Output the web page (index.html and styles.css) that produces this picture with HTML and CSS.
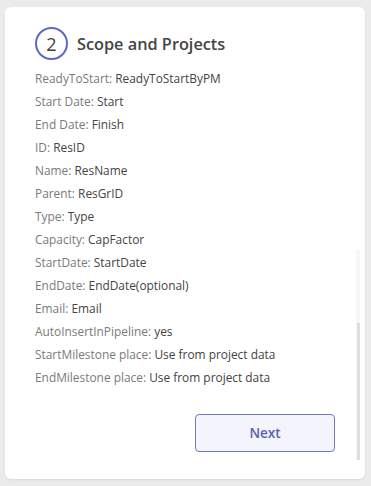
FILE: index.html
```html
<!DOCTYPE html>
<html>
<head>
<meta charset="utf-8">
<link rel="stylesheet" href="styles.css">
</head>
<body>
<div class="card">
  <div class="content">
    <div class="header">
      <div class="step">2</div>
      <h2 class="title">Scope and Projects</h2>
    </div>
    <ul class="fields">
      <li><span class="lbl">ReadyToStart:</span> <span class="val">ReadyToStartByPM</span></li>
      <li><span class="lbl">Start Date:</span> <span class="val">Start</span></li>
      <li><span class="lbl">End Date:</span> <span class="val">Finish</span></li>
      <li><span class="lbl">ID:</span> <span class="val">ResID</span></li>
      <li><span class="lbl">Name:</span> <span class="val">ResName</span></li>
      <li><span class="lbl">Parent:</span> <span class="val">ResGrID</span></li>
      <li><span class="lbl">Type:</span> <span class="val">Type</span></li>
      <li><span class="lbl">Capacity:</span> <span class="val">CapFactor</span></li>
      <li><span class="lbl">StartDate:</span> <span class="val">StartDate</span></li>
      <li><span class="lbl">EndDate:</span> <span class="val">EndDate(optional)</span></li>
      <li><span class="lbl">Email:</span> <span class="val">Email</span></li>
      <li><span class="lbl">AutoInsertInPipeline:</span> <span class="val">yes</span></li>
      <li><span class="lbl">StartMilestone place:</span> <span class="val">Use from project data</span></li>
      <li><span class="lbl">EndMilestone place:</span> <span class="val">Use from project data</span></li>
    </ul>
    <div class="actions">
      <button class="next">Next</button>
    </div>
  </div>
  <div class="scroll-track"><div class="scroll-thumb"></div></div>
</div>
</body>
</html>
```
FILE: styles.css
```css
html, body {
  margin: 0;
  padding: 0;
}
body {
  background: #ebebeb;
  width: 371px;
  height: 486px;
  overflow: hidden;
  font-family: "Open Sans", "Noto Sans", sans-serif;
}
.card {
  position: relative;
  margin: 7px 0 0 5px;
  width: 360px;
  height: 472px;
  background: #fff;
  border-radius: 6px;
  box-shadow: 0 1px 2px rgba(0,0,0,0.08);
  box-sizing: border-box;
}
.content {
  padding: 20px 30px 0 30px;
}
.header {
  display: flex;
  align-items: center;
  gap: 9px;
}
.step {
  width: 29px;
  height: 29px;
  border: 2px solid #5d66cc;
  border-radius: 50%;
  display: flex;
  align-items: center;
  justify-content: center;
  font-size: 18px;
  color: #3f3f3f;
  flex: none;
}
.title {
  margin: 0;
  font-size: 16.3px;
  font-weight: 600;
  color: #454545;
}
.fields {
  list-style: none;
  margin: 6px 0 0 0;
  padding: 0;
}
.fields li {
  height: 23px;
  line-height: 24px;
  font-size: 11.9px;
  white-space: nowrap;
}
.lbl {
  color: #7a7a7a;
}
.val {
  color: #444;
}
.actions {
  display: flex;
  justify-content: flex-end;
  margin-top: 26px;
}
.next {
  width: 140px;
  height: 38px;
  background: #f3f4fc;
  border: 1px solid #6f78c6;
  border-radius: 4px;
  color: #5860b3;
  font-family: "Open Sans", "Noto Sans", sans-serif;
  font-size: 13.5px;
  font-weight: 600;
  cursor: pointer;
}
.scroll-track {
  position: absolute;
  left: 351px;
  top: 243px;
  width: 4px;
  height: 210px;
  background: #f7f7f7;
}
.scroll-thumb {
  position: absolute;
  left: 1px;
  top: 73px;
  width: 3px;
  height: 137px;
  background: #dedede;
}
```
